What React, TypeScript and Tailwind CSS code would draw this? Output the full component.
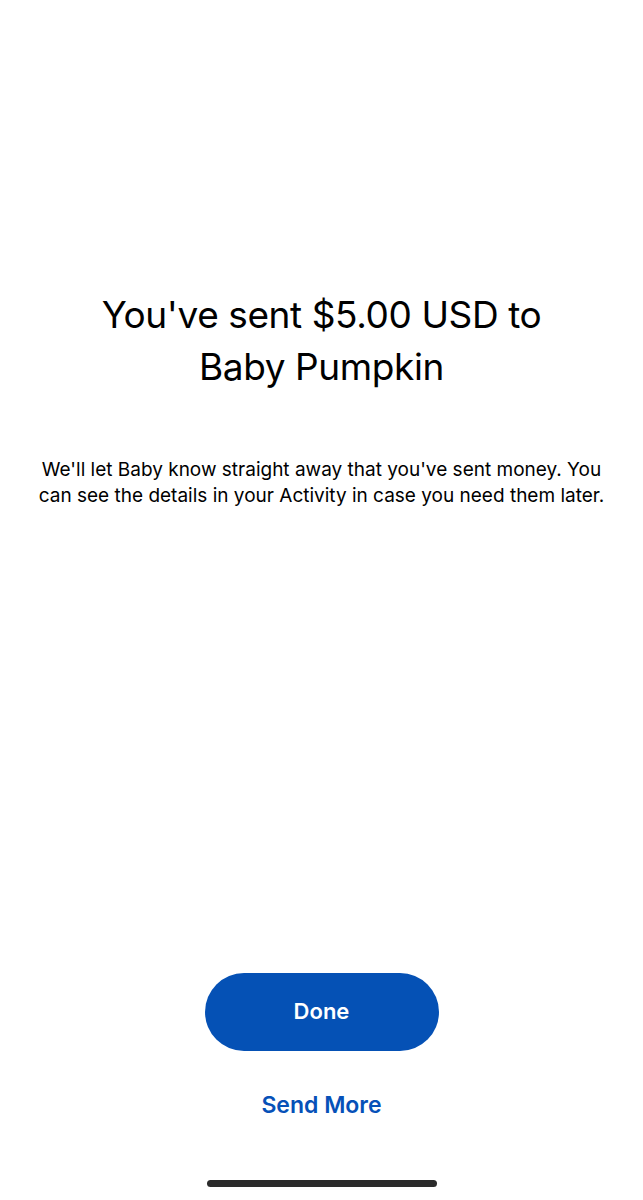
export default function App() {
  return (
    <div className="flex min-h-[1200px] w-full flex-col items-center bg-white font-['Inter',sans-serif] text-black">
      <div className="flex flex-col items-center px-6 pt-[289px] text-center">
        <h1 className="text-[37px] leading-[52px] font-normal tracking-[-0.4px]">
          You've sent $5.00 USD to
          <br />
          Baby Pumpkin
        </h1>
        <p className="mt-[64px] text-[19px] leading-[26px] whitespace-nowrap">
          We'll let Baby know straight away that you've sent money. You
          <br />
          can see the details in your Activity in case you need them later.
        </p>
      </div>

      <div className="flex-1" />

      <div className="flex flex-col items-center">
        <button className="h-[78px] w-[234px] rounded-full bg-[#0551b5] text-[22px] font-semibold text-white">
          Done
        </button>
        <button className="mt-[37px] text-[23px] font-semibold text-[#0651b8]">
          Send More
        </button>
        <div className="mt-[58px] mb-[13px] h-[7px] w-[230px] rounded-full bg-[#2b2b2b]" />
      </div>
    </div>
  );
}
